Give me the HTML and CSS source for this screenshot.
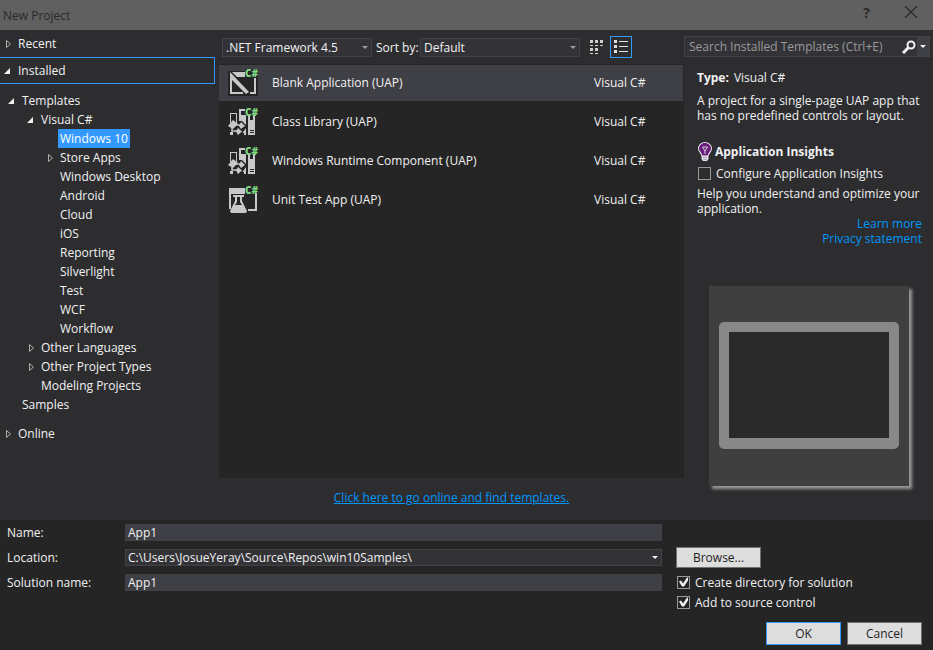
FILE: index.html
```html
<!DOCTYPE html>
<html lang="en">
<head>
    <title>New Project</title>
    <meta charset="UTF-8">
    <link rel="stylesheet" href="styles.css">
</head>

<body>
    <!-- shared shapes -->
    <svg class="defs" width="0" height="0" aria-hidden="true">
        <symbol id="open" viewBox="0 0 10 10"><path d="M8 2V8H2Z" fill="#f1f1f1"/></symbol>
        <symbol id="closed" viewBox="0 0 10 10"><path d="M4.500 1.500L8.500 5L4.500 8.500Z" fill="none" stroke="#b0b0b0"/></symbol>
        <symbol id="library" viewBox="0 0 30 30">
            <g fill="#c8c8c8" shape-rendering="crispEdges">
                <path d="M2 6H9V16H8V7H3V16H2Z"/>
                <path d="M11 2H18V4H13V8H18V28H16V26H14V15H11Z"/>
                <path d="M20 8H27V28H20Z"/>
                <path d="M2 25H5V28H2Z"/>
            </g>
            <path d="M22 8H25V13H22Z M22 23H26V24H22Z M22 25H26V26H22Z" fill="#252526"/>
            <path d="M10 14H14L18 18V21L13 28H8L6 24Z" fill="#252526"/>
            <g fill="#c8c8c8">
                <path d="M5 13L10 17L5 22L0 19Z"/>
                <path d="M13 15L17 19L13 22L11 19Z"/>
                <path d="M10 21L14 24.500L10 28L8 24.500Z"/>
            </g>
            <path d="M7 18H12M4 21V24H9" fill="none" stroke="#c8c8c8" stroke-width="1.500"/>
        </symbol>
    </svg>

    <form class="dialog">
        <header class="titlebar">
            <h1>New Project</h1>
            <button type="button" class="help" aria-label="Help">?</button>
            <button type="button" class="close" aria-label="Close">
                <svg width="12" height="12" viewBox="0 0 12 12"><path d="M0 0L12 12M12 0L0 12" stroke="#2a2a2a" stroke-width="1.300"/></svg>
            </button>
        </header>

        <main class="content">
            <nav class="sidebar">
                <div class="group"><svg class="arrow"><use href="#closed"/></svg><span>Recent</span></div>
                <div class="group current"><svg class="arrow"><use href="#open"/></svg><span>Installed</span></div>
                <ul class="tree">
                    <li>
                        <div class="node"><svg class="arrow"><use href="#open"/></svg><span>Templates</span></div>
                        <ul>
                            <li>
                                <div class="node"><svg class="arrow"><use href="#open"/></svg><span>Visual C#</span></div>
                                <ul>
                                    <li class="node selected"><svg class="arrow"></svg><span>Windows 10</span></li>
                                    <li class="node"><svg class="arrow"><use href="#closed"/></svg><span>Store Apps</span></li>
                                    <li class="node"><svg class="arrow"></svg><span>Windows Desktop</span></li>
                                    <li class="node"><svg class="arrow"></svg><span>Android</span></li>
                                    <li class="node"><svg class="arrow"></svg><span>Cloud</span></li>
                                    <li class="node"><svg class="arrow"></svg><span>iOS</span></li>
                                    <li class="node"><svg class="arrow"></svg><span>Reporting</span></li>
                                    <li class="node"><svg class="arrow"></svg><span>Silverlight</span></li>
                                    <li class="node"><svg class="arrow"></svg><span>Test</span></li>
                                    <li class="node"><svg class="arrow"></svg><span>WCF</span></li>
                                    <li class="node"><svg class="arrow"></svg><span>Workflow</span></li>
                                </ul>
                            </li>
                            <li class="node"><svg class="arrow"><use href="#closed"/></svg><span>Other Languages</span></li>
                            <li class="node"><svg class="arrow"><use href="#closed"/></svg><span>Other Project Types</span></li>
                            <li class="node"><svg class="arrow"></svg><span>Modeling Projects</span></li>
                        </ul>
                    </li>
                    <li class="node"><svg class="arrow"></svg><span>Samples</span></li>
                </ul>
                <div class="group"><svg class="arrow"><use href="#closed"/></svg><span>Online</span></div>
            </nav>

            <section class="browser">
                <div class="toolbar">
                    <div class="combo framework">
                        <select aria-label="Framework"><option>.NET Framework 4.5</option></select>
                    </div>
                    <label for="sort">Sort by:</label>
                    <div class="combo sort">
                        <select id="sort"><option>Default</option></select>
                    </div>
                    <button type="button" class="view" aria-label="Medium icons">
                        <svg width="14" height="14" viewBox="0 0 14 14" fill="#d0d0d0" shape-rendering="crispEdges">
                            <path d="M0 0h3v3H0Z M5 0h3v3H5Z M10 0h3v3h-3Z M0 8h3v3H0Z M5 8h3v3H5Z"/>
                            <path d="M0 5h3v1H0Z M5 5h3v1H5Z M10 5h3v1h-3Z M0 13h3v1H0Z M5 13h3v1H5Z"/>
                        </svg>
                    </button>
                    <button type="button" class="view active" aria-label="Small icons">
                        <svg width="14" height="14" viewBox="0 0 14 14" fill="#e0e0e0" shape-rendering="crispEdges">
                            <path d="M0 0h3v3H0Z M0 5h3v3H0Z M0 10h3v3H0Z M5 1h9v1H5Z M5 6h9v1H5Z M5 11h9v1H5Z"/>
                        </svg>
                    </button>
                </div>

                <ul class="templates">
                    <li class="selected">
                        <svg class="icon" viewBox="0 0 30 30">
                            <path d="M0 3H17V1H30V28H0Z" fill="#252526"/>
                            <g fill="#c8c8c8">
                                <path d="M4 4H17V9H9Z"/>
                                <path d="M2 4L21 24L18 26L2 10Z"/>
                                <path d="M2 8H4V24H15V26H2Z M26 10H28V26H22V24H26Z"/>
                            </g>
                            <text x="17" y="9" class="badge">C#</text>
                        </svg>
                        <span class="name">Blank Application (UAP)</span>
                        <span class="lang">Visual C#</span>
                    </li>
                    <li>
                        <svg class="icon" viewBox="0 0 30 30">
                            <use href="#library" width="30" height="30"/>
                            <path d="M17 0H30V8H17Z" fill="#252526"/>
                            <text x="17" y="9" class="badge">C#</text>
                        </svg>
                        <span class="name">Class Library (UAP)</span>
                        <span class="lang">Visual C#</span>
                    </li>
                    <li>
                        <svg class="icon" viewBox="0 0 30 30">
                            <use href="#library" width="30" height="30"/>
                            <path d="M17 0H30V8H17Z" fill="#252526"/>
                            <text x="17" y="9" class="badge">C#</text>
                        </svg>
                        <span class="name">Windows Runtime Component (UAP)</span>
                        <span class="lang">Visual C#</span>
                    </li>
                    <li>
                        <svg class="icon" viewBox="0 0 30 30">
                            <path d="M1 3H17V9H3V24H1Z M27 8H29V26H20V24H27Z" fill="#c8c8c8"/>
                            <path d="M5 10H16V12H14V16L19 26L18 28H3L2 26L7 16V12H5Z" fill="#c8c8c8"/>
                            <path d="M9 12H12V17L14 20H7L9 17Z" fill="#252526"/>
                            <text x="17" y="9" class="badge">C#</text>
                        </svg>
                        <span class="name">Unit Test App (UAP)</span>
                        <span class="lang">Visual C#</span>
                    </li>
                </ul>

                <p class="online"><a href="#">Click here to go online and find templates.</a></p>
            </section>

            <aside class="details">
                <div class="search">
                    <input type="search" placeholder="Search Installed Templates (Ctrl+E)" aria-label="Search Installed Templates">
                    <svg width="14" height="14" viewBox="0 0 14 14" fill="none" stroke="#f1f1f1"><circle cx="9" cy="5" r="3.500" stroke-width="2"/><path d="M6.500 7.500L1 13" stroke-width="3"/></svg>
                    <button type="button" class="drop" aria-label="Search options"></button>
                </div>
                <div class="info">
                    <p class="type"><b>Type:</b><span>Visual C#</span></p>
                    <p class="text">A project for a single-page UAP app that has no predefined controls or layout.</p>
                    <h2>
                        <svg width="16" height="21" viewBox="0 0 16 21">
                            <path d="M8 1C4 1 1 4 1 7.500C1 10.500 3.500 12 4.500 15V18L6 20H10L11.500 18V15C12.500 12 15 10.500 15 7.500C15 4 12 1 8 1Z" fill="#e8e0ec"/>
                            <path d="M8 2C4.500 2 2 4.500 2 7.500C2 10 4.500 11.500 5.500 14.500H10.500C11.500 11.500 14 10 14 7.500C14 4.500 11.500 2 8 2Z" fill="#68217a"/>
                            <path d="M8 13V10L5.500 6H10.500L8 10" fill="none" stroke="#d8c8e0"/>
                            <path d="M6 16.500H10M6.500 18.500H9.500" stroke="#a99bb0"/>
                        </svg>
                        Application Insights
                    </h2>
                    <label class="check"><input type="checkbox">Configure Application Insights</label>
                    <p class="text">Help you understand and optimize your application.</p>
                    <p class="links"><a href="#">Learn more</a><a href="#">Privacy statement</a></p>
                    <div class="preview"><div class="tablet"></div></div>
                </div>
            </aside>
        </main>

        <footer class="footer">
            <div class="fields">
                <label for="name">Name:</label>
                <input type="text" id="name" value="App1">
                <label for="location">Location:</label>
                <div class="combo bright">
                    <select id="location"><option>C:\Users\JosueYeray\Source\Repos\win10Samples\</option></select>
                </div>
                <label for="solution">Solution name:</label>
                <input type="text" id="solution" value="App1">
            </div>
            <div class="options">
                <button type="button" class="btn browse">Browse...</button>
                <label class="check"><input type="checkbox" checked>Create directory for solution</label>
                <label class="check"><input type="checkbox" checked>Add to source control</label>
                <div class="actions">
                    <button type="submit" class="btn primary">OK</button>
                    <button type="button" class="btn">Cancel</button>
                </div>
            </div>
        </footer>
    </form>
</body>

</html>
```

FILE: styles.css
```css
* {
    box-sizing: border-box;
}

body {
    margin: 0;
    background-color: #252526;
}

body, button, input, select {
    font-family: "Open Sans", "Noto Sans", sans-serif;
    font-size: 12px;
    line-height: 15px;
    color: #f1f1f1;
}

ul, p, h1, h2 {
    margin: 0;
    padding: 0;
    list-style: none;
    font-size: 12px;
}

button, input, select {
    margin: 0;
    padding: 0;
    border: none;
    border-radius: 0;
    background: none;
}

svg {
    display: block;
    flex: none;
}

a {
    color: #0097fb;
    text-decoration: none;
}

.defs {
    position: absolute;
}

.dialog {
    display: flex;
    flex-direction: column;
    min-height: 100vh;
}

/* title bar */
.titlebar {
    display: flex;
    align-items: center;
    height: 30px;
    padding: 0 16px 0 3px;
    background-color: #606060;
}

.titlebar h1 {
    flex: 1;
    font-weight: normal;
    color: #2a2a2a;
}

.titlebar button {
    padding-bottom: 6px;
    color: #2a2a2a;
}

.help {
    margin-right: 35px;
    font-size: 14px;
    font-weight: bold;
}

.content {
    flex: 1;
    display: grid;
    grid-template-columns: 219px 1fr 249px;
    background-color: #2d2d30;
}

/* category tree */
.group, .node {
    display: flex;
    align-items: center;
    gap: 4px;
}

.group {
    height: 27px;
    padding-left: 2px;
}

.group.current {
    margin-right: 4px;
    border: 1px solid #3399ff;
    border-left: none;
}

.arrow {
    width: 10px;
    height: 10px;
}

.group span, .node span {
    padding: 0 2px;
    line-height: 19px;
}

.tree {
    padding: 7px 0 6px 6px;
}

.tree ul {
    padding-left: 19px;
}

.node {
    height: 19px;
}

.node.selected span {
    background-color: #3399ff;
    color: #fff;
}

/* toolbar */
.browser {
    display: flex;
    flex-direction: column;
}

.toolbar {
    display: flex;
    align-items: center;
    height: 34px;
    padding-left: 3px;
}

.combo {
    position: relative;
    height: 19px;
    border: 1px solid #434346;
    background-color: #333337;
}

.combo select {
    display: block;
    width: 100%;
    height: 17px;
    padding-left: 3px;
    appearance: none;
}

.combo::after, .drop::after {
    content: "";
    border: 3px solid transparent;
    border-top-color: #999;
    border-bottom: none;
}

.combo::after {
    position: absolute;
    top: 7px;
    right: 3px;
    pointer-events: none;
}

.bright::after, .drop::after {
    border-top-color: #f1f1f1;
}

.framework {
    width: 150px;
    margin-right: 4px;
}

.sort {
    width: 160px;
    margin: 0 6px 0 auto;
}

.view {
    display: grid;
    place-items: center;
    width: 22px;
    height: 22px;
    border: 1px solid transparent;
}

.view.active {
    margin: 0 52px 0 2px;
    border-color: #3399ff;
}

/* template list */
.templates {
    flex: 1;
    padding-top: 1px;
    background-color: #252526;
}

.templates li {
    display: flex;
    align-items: center;
    height: 36px;
    margin-bottom: 3px;
    padding: 0 0 1px 9px;
}

.templates .selected {
    margin-right: 1px;
    background-color: #3f3f46;
}

.icon {
    width: 30px;
    height: 30px;
    margin-right: 14px;
    overflow: visible;
}

.badge {
    font-size: 10px;
    font-weight: 800;
    fill: #7fdc84;
}

.name {
    flex: 1;
}

.lang {
    width: 90px;
}

.selected .lang {
    width: 89px;
}

.online {
    padding: 12px 0 15px;
    text-align: center;
}

.online a {
    text-decoration: underline;
}

/* details */
.search {
    display: flex;
    align-items: center;
    height: 21px;
    margin: 6px 3px 0 0;
    border: 1px solid #434346;
    background-color: #333337;
}

.search input {
    flex: 1;
    min-width: 0;
    padding-left: 4px;
}

.search input::placeholder {
    color: #999;
}

.drop {
    display: grid;
    place-items: center;
    width: 12px;
    height: 19px;
    margin-left: 1px;
    background-color: #3f3f46;
}

.info {
    padding: 13px 11px 0 13px;
}

.type {
    display: flex;
    gap: 5px;
    margin-bottom: 8px;
}

h2 {
    display: flex;
    align-items: center;
    height: 21px;
    margin: 18px 0 4px;
    gap: 2px;
}

.check {
    display: flex;
    align-items: center;
    gap: 5px;
}

.check input {
    appearance: none;
    width: 13px;
    height: 13px;
    border: 1px solid #999;
}

/* tick mark */
.check input:checked::before {
    content: "";
    display: block;
    width: 11px;
    height: 11px;
    background-color: #f1f1f1;
    clip-path: polygon(1px 5px, 3px 4px, 5px 7px, 9px 1px, 10px 1px, 10px 4px, 6px 10px, 4px 10px);
}

.info .check {
    margin: 0 0 5px 1px;
}

.links a {
    display: block;
    width: fit-content;
    margin-left: auto;
}

.preview {
    display: grid;
    justify-content: center;
    align-content: start;
    width: 200px;
    height: 200px;
    margin: 40px 0 0 12px;
    padding-top: 36px;
    background-color: #3f3f40;
    box-shadow: 3px 3px 3px #999;
}

.tablet {
    width: 180px;
    height: 127px;
    border: 10px solid #888;
    border-bottom-width: 11px;
    border-radius: 5px;
    background-color: #2a2a2a;
}

/* footer */
.footer {
    display: grid;
    grid-template-columns: 1fr 246px;
    gap: 14px;
    padding: 4px 11px 5px 7px;
}

.fields {
    display: grid;
    grid-template-columns: 110px 1fr;
    gap: 8px;
    align-content: start;
    align-items: center;
}

.fields label {
    height: 17px;
    line-height: 17px;
}

.fields input {
    height: 17px;
    padding-left: 3px;
    background-color: #3f3f46;
}

.fields .combo {
    height: 17px;
}

.fields select {
    height: 15px;
    padding-left: 2px;
}

.fields .combo::after {
    top: 6px;
}

.options {
    display: flex;
    flex-direction: column;
    align-items: flex-start;
    padding-top: 23px;
}

.options .check {
    height: 20px;
    padding-left: 1px;
}

.btn {
    width: 75px;
    height: 23px;
    border: 1px solid #707070;
    background-color: #ddd;
    color: #1e1e1e;
}

.browse {
    width: 85px;
    height: 21px;
    margin-bottom: 4px;
}

.primary {
    border-color: #3399ff;
}

.actions {
    display: flex;
    gap: 6px;
    align-self: flex-end;
    margin-top: 10px;
}
```
